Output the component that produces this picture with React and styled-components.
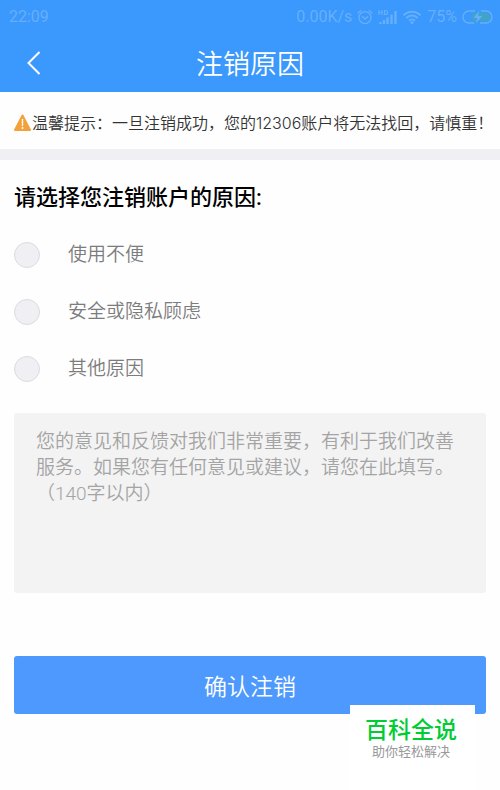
import React, { useState } from "react";
import styled, { createGlobalStyle } from "styled-components";

const GlobalStyle = createGlobalStyle`
  * { box-sizing: border-box; }
  body {
    margin: 0;
    background: #fefefe;
    font-family: Roboto, "Noto Sans CJK SC", sans-serif;
  }
`;

const cjk = `Roboto, "Noto Sans CJK SC", sans-serif`;

const Page = styled.div`
  position: relative;
  min-height: 100vh;
  background: #fefefe;
`;

const TopArea = styled.header`
  background: #3b98fc;
  color: #fff;
`;

const StatusBar = styled.div`
  display: flex;
  align-items: center;
  justify-content: space-between;
  height: 34px;
  padding: 0 7px 0 9px;
  font-size: 16px;
  line-height: 20px;
  color: #65affd;
`;

const StatusGroup = styled.div`
  display: flex;
  align-items: center;
  gap: 5px;
`;

const StatusIcon = styled.svg`
  display: block;
  flex: none;
  fill: none;
  stroke: currentColor;
`;

const TitleBar = styled.div`
  display: grid;
  grid-template-columns: 68px 1fr 68px;
  align-items: center;
  height: 58px;
`;

const BackButton = styled.button`
  display: flex;
  align-items: center;
  justify-content: center;
  height: 58px;
  padding: 0;
  border: 0;
  background: none;
  color: #fff;
  cursor: pointer;
`;

const Title = styled.h1`
  margin: 0;
  padding-top: 4px;
  font: 350 27px/40px ${cjk};
  text-align: center;
`;

const Notice = styled.p`
  display: flex;
  align-items: center;
  margin: 0;
  height: 57px;
  padding: 4px 0 0 14px;
  font: 350 16px/24px Inter, "Noto Sans CJK SC", sans-serif;
  color: #333;
  white-space: nowrap;
`;

const WarningIcon = styled.svg`
  display: block;
  flex: none;
  margin-right: 1px;
`;

const Divider = styled.div`
  height: 11px;
  background: #efeff4;
`;

const Form = styled.form`
  padding: 22px 14px 0;
`;

const Reasons = styled.fieldset`
  margin: 0;
  padding: 0;
  border: 0;
`;

const Heading = styled.legend`
  padding: 0;
  font: 500 22px/32px ${cjk};
  color: #000;
`;

const Option = styled.label`
  display: flex;
  align-items: center;
  gap: 28px;
  height: 57px;
  cursor: pointer;
`;

const OptionList = styled.div`
  padding-top: 12px;
`;

const Radio = styled.input`
  appearance: none;
  flex: none;
  width: 26px;
  height: 26px;
  margin: 0;
  border: 1px solid #dcdcde;
  border-radius: 50%;
  background: #efeff4;

  &:checked {
    border: 8px solid #4d99fd;
  }
`;

const OptionText = styled.span`
  font: 350 19px/28px ${cjk};
  color: #7c7c7c;
`;

const Feedback = styled.textarea`
  display: block;
  width: 100%;
  height: 180px;
  margin-top: 16px;
  padding: 16px 22px;
  border: 0;
  border-radius: 3px;
  background: #f3f3f3;
  font: 350 19px/26px ${cjk};
  color: #555;
  resize: none;

  &::placeholder {
    color: #a4a4a4;
    opacity: 1;
  }
`;

const Submit = styled.button`
  display: block;
  width: 100%;
  height: 58px;
  margin-top: 63px;
  padding: 6px 0 0;
  border: 0;
  border-radius: 3px;
  background: #4d99fd;
  color: #fff;
  font: 350 23px/34px ${cjk};
  cursor: pointer;
`;

const Badge = styled.aside`
  position: absolute;
  right: 25px;
  bottom: 0;
  width: 125px;
  height: 85px;
  padding: 12px 3px 0 0;
  background: #fff;
  text-align: center;
`;

const BadgeName = styled.div`
  font: 500 23px/28px ${cjk};
  color: #00cc33;
`;

const BadgeTagline = styled.div`
  font: 400 13px/14px ${cjk};
  color: #999;
`;

const reasons = ["使用不便", "安全或隐私顾虑", "其他原因"];

function AlarmIcon() {
  return (
    <StatusIcon width="16" height="16" viewBox="0 0 16 16" strokeWidth="1.4" strokeLinecap="round">
      <circle cx="8" cy="8.6" r="6" />
      <path d="M1 4 3.8 1.5M15 4l-2.800-2.500M5.600 7.800 8 10l2.600-2.200" />
    </StatusIcon>
  );
}

function SignalIcon() {
  return (
    <StatusIcon width="19" height="16" viewBox="0 0 19 16" strokeWidth="1.2">
      <path d="M1 1v5M4 1v5M1 3.500h3M6.500 1.500v4h1.200q1.800 0 1.800-2t-1.800-2z" />
      <path strokeWidth="2.4" d="M2.500 15v-2M6 15v-4M9.500 15V8.500M13.500 15V5.500M17.500 15V2" />
    </StatusIcon>
  );
}

function WifiIcon() {
  return (
    <StatusIcon width="20" height="16" viewBox="0 0 20 16" strokeWidth="2">
      <path d="M1.500 6.200a12 12 0 0 1 17 0M4.300 9a8 8 0 0 1 11.400 0M7 11.700a4.300 4.300 0 0 1 6 0" />
      <circle cx="10" cy="13.600" r="1.500" fill="currentColor" stroke="none" />
    </StatusIcon>
  );
}

function BatteryIcon() {
  return (
    <StatusIcon width="31" height="14" viewBox="0 0 31 14">
      <rect x="10" y="3" width="18" height="8" rx="3" fill="#40a5c5" stroke="none" />
      <path strokeWidth="1.400" d="M13 1H7a6 6 0 0 0 0 12h5M19 1h5a6 6 0 0 1 0 12h-6" />
      <path d="m17.500.5-6 7.500h4l-2 5.500 7-7.500h-4.500z" fill="currentColor" stroke="none" />
    </StatusIcon>
  );
}

export default function App() {
  const [reason, setReason] = useState("");
  const [feedback, setFeedback] = useState("");

  return (
    <Page>
      <GlobalStyle />
      <TopArea>
        <StatusBar>
          <span>22:09</span>
          <StatusGroup>
            <span>0.00K/s</span>
            <AlarmIcon />
            <SignalIcon />
            <WifiIcon />
            <span>75%</span>
            <BatteryIcon />
          </StatusGroup>
        </StatusBar>
        <TitleBar>
          <BackButton type="button" aria-label="返回">
            <svg width="14" height="24" viewBox="0 0 14 24" fill="none" stroke="currentColor" strokeWidth="2">
              <path d="M12.500 1 1.500 12l11 11" />
            </svg>
          </BackButton>
          <Title>注销原因</Title>
        </TitleBar>
      </TopArea>
      <Notice>
        <WarningIcon width="17" height="18" viewBox="0 0 17 18">
          <path d="M8.500 1.500 16 16H1z" fill="#f3a13b" stroke="#f3a13b" strokeWidth="2" strokeLinejoin="round" />
          <path d="M8.500 5.500v6" stroke="#fff" strokeWidth="1.400" strokeLinecap="round" />
          <circle cx="8.500" cy="14" r="1" fill="#fff" />
        </WarningIcon>
        温馨提示：一旦注销成功，您的12306账户将无法找回，请慎重！
      </Notice>
      <Divider />
      <Form onSubmit={(e) => e.preventDefault()}>
        <Reasons>
          <Heading>请选择您注销账户的原因:</Heading>
          <OptionList>
            {reasons.map((text) => (
              <Option key={text}>
                <Radio
                  type="radio"
                  name="reason"
                  value={text}
                  checked={reason === text}
                  onChange={() => setReason(text)}
                />
                <OptionText>{text}</OptionText>
              </Option>
            ))}
          </OptionList>
        </Reasons>
        <Feedback
          aria-label="意见和反馈"
          maxLength={140}
          value={feedback}
          onChange={(e) => setFeedback(e.target.value)}
          placeholder="您的意见和反馈对我们非常重要，有利于我们改善服务。如果您有任何意见或建议，请您在此填写。（140字以内）"
        />
        <Submit type="submit">确认注销</Submit>
      </Form>
      <Badge>
        <BadgeName>百科全说</BadgeName>
        <BadgeTagline>助你轻松解决</BadgeTagline>
      </Badge>
    </Page>
  );
}
